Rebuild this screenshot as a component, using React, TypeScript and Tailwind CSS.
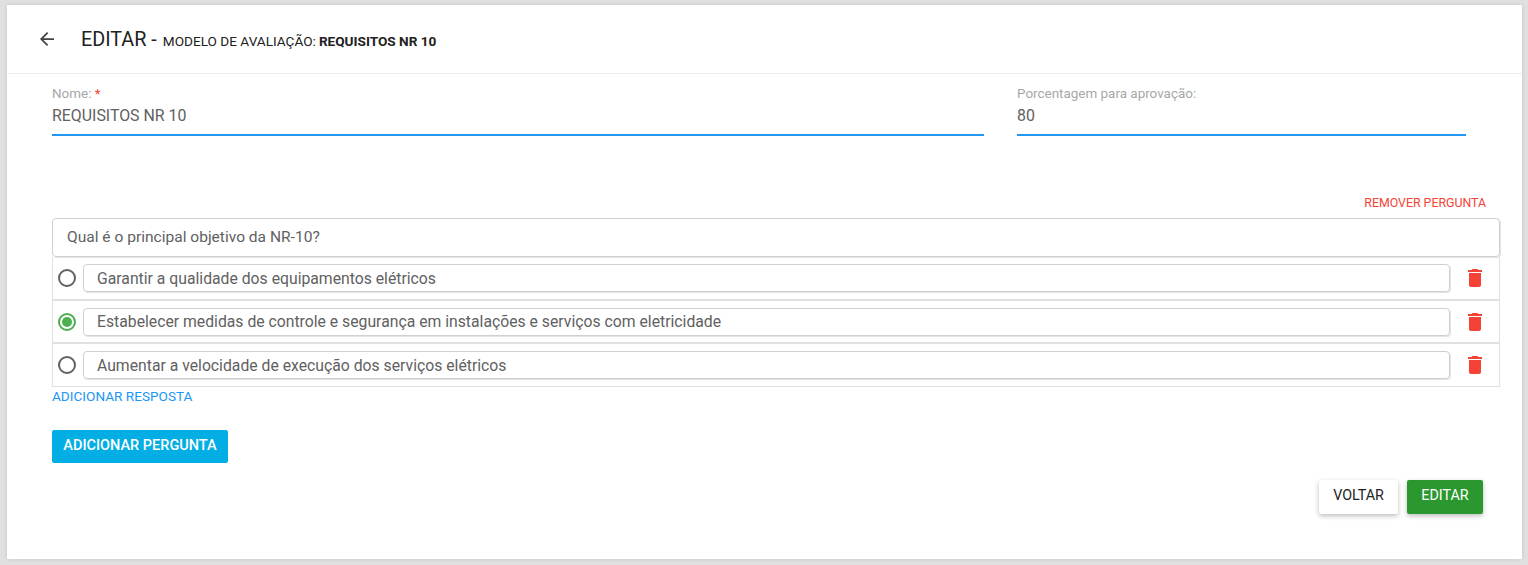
const ArrowBack = () => (
  <svg width="24" height="24" viewBox="0 0 24 24" className="fill-[#424242]">
    <path d="M20 11H7.83l5.59-5.59L12 4l-8 8 8 8 1.41-1.41L7.83 13H20v-2z" transform="translate(12 12) scale(0.875) translate(-12 -12)" />
  </svg>
);

const TrashIcon = () => (
  <svg width="24" height="24" viewBox="0 0 24 24" className="fill-[#f44336]">
    <path d="M6 19c0 1.1.9 2 2 2h8c1.1 0 2-.9 2-2V7H6v12zM19 4h-3.5l-1-1h-5l-1 1H5v2h14V4z" />
  </svg>
);

const answers = [
  { text: 'Garantir a qualidade dos equipamentos elétricos', correct: false, height: 'h-[44px]' },
  { text: 'Estabelecer medidas de controle e segurança em instalações e serviços com eletricidade', correct: true, height: 'h-[43px]' },
  { text: 'Aumentar a velocidade de execução dos serviços elétricos', correct: false, height: 'h-[42px]' },
];

export default function App() {
  return (
    <div className="h-[565px] bg-[#e0e0e0] pt-[5px] pl-[7px] pr-[6px] pb-[6px] font-['Roboto',sans-serif] overflow-hidden">
      <div className="h-[554px] bg-white shadow-[0_0_4px_rgba(0,0,0,0.12)]">
        {/* Header */}
        <div className="h-[69px] border-b border-[#eeeeee] flex items-center pl-[28px]">
          <ArrowBack />
          <span className="ml-[22px] mt-[1px] text-[19.8px] text-[#212121]">EDITAR -</span>
          <span className="ml-[6px] mt-[4px] text-[13.6px] text-[#212121]">MODELO DE AVALIAÇÃO:</span>
          <span className="ml-[3px] mt-[4px] text-[13.6px] font-bold text-[#212121]">REQUISITOS NR 10</span>
        </div>

        <div className="pl-[45px] pr-[22px]">
          {/* Fields */}
          <div className="flex pr-[34px] pt-[12px]">
            <div className="w-[932px] h-[50px] border-b-2 border-[#2196f3]">
              <div className="text-[13.45px] leading-[16px] text-[#a8a8a8]">
                Nome: <span className="text-[#f44336]">*</span>
              </div>
              <div className="text-[15.9px] leading-[28px] text-[#616161]">REQUISITOS NR 10</div>
            </div>
            <div className="ml-[33px] w-[449px] h-[50px] border-b-2 border-[#2196f3]">
              <div className="text-[13.45px] leading-[16px] text-[#a8a8a8]">Porcentagem para aprovação:</div>
              <div className="text-[15.9px] leading-[28px] text-[#616161]">80</div>
            </div>
          </div>

          {/* Question */}
          <div className="mt-[60px] pr-[14px] text-right text-[12.35px] leading-[14px] text-[#f44336]">REMOVER PERGUNTA</div>
          <div className="mt-[8px] h-[39px] border border-[#d0d0d0] shadow-[1px_1px_0_#e4e4e4] rounded-[4px] flex items-center pl-[14px] text-[15.55px] text-[#616161]">
            Qual é o principal objetivo da NR-10?
          </div>

          {/* Answers */}
          <div className="border border-[#e0e0e0] border-t-0">
            {answers.map((a, i) => (
              <div
                key={a.text}
                className={`flex items-center ${a.height} pl-[5px] ${i < answers.length - 1 ? 'border-b-2 border-[#e0e0e0]' : ''}`}
              >
                {a.correct ? (
                  <div className="w-[18px] h-[18px] rounded-full border-2 border-[#4caf50] flex items-center justify-center shrink-0">
                    <div className="w-[10px] h-[10px] rounded-full bg-[#4caf50]" />
                  </div>
                ) : (
                  <div className="w-[18px] h-[18px] rounded-full border-2 border-[#616161] shrink-0" />
                )}
                <div className="ml-[7px] w-[1367px] h-[28px] border border-[#d0d0d0] shadow-[1px_1px_0_#e4e4e4] rounded-[4px] flex items-center pl-[13px] pt-[1px] text-[15.75px] text-[#616161]">
                  {a.text}
                </div>
                <div className="ml-[13px]">
                  <TrashIcon />
                </div>
              </div>
            ))}
          </div>
          <div className="mt-[1px] text-[13.6px] leading-[16px] text-[#2196f3]">ADICIONAR RESPOSTA</div>

          <button className="mt-[26px] block h-[33px] w-[176px] rounded-[2px] bg-[#03aee4] pb-[2px] text-white text-[14.5px] font-medium">
            ADICIONAR PERGUNTA
          </button>

          {/* Footer */}
          <div className="mt-[17px] flex justify-end gap-[9px] pr-[17px]">
            <button className="h-[34px] w-[79px] rounded-[2px] bg-white pb-[2px] text-[#212121] text-[14.3px] shadow-[0_2px_5px_rgba(0,0,0,0.26)]">
              VOLTAR
            </button>
            <button className="h-[34px] w-[76px] rounded-[2px] bg-[#2b982f] pb-[2px] text-white text-[14.3px] shadow-[0_2px_5px_rgba(0,0,0,0.26)]">
              EDITAR
            </button>
          </div>
        </div>
      </div>
    </div>
  );
}
